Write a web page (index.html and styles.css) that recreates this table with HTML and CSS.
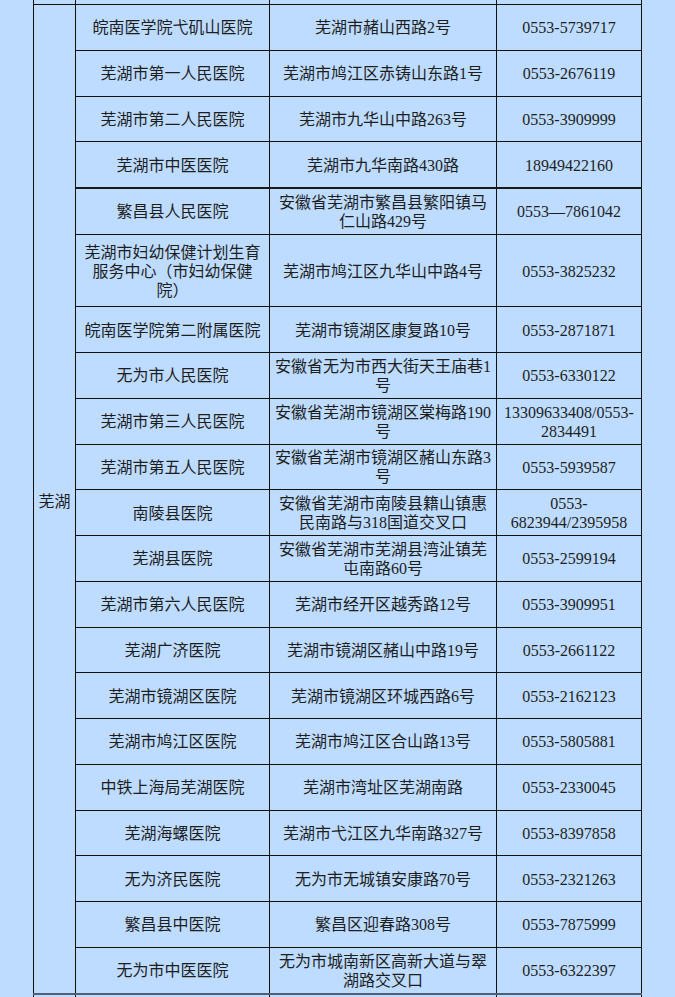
FILE: index.html
```html
<!DOCTYPE html>
<html lang="zh-CN">
<head>
<meta charset="utf-8">
<title>芜湖医院列表</title>
<link rel="stylesheet" href="styles.css">
</head>
<body>
<table class="list">
  <colgroup>
    <col class="c-city">
    <col class="c-name">
    <col class="c-addr">
    <col class="c-tel">
  </colgroup>
  <tbody>
    <tr class="r-top"><td></td><td></td><td></td><td></td></tr>
    <tr class="r"><td class="city" rowspan="21">芜湖</td><td>皖南医学院弋矶山医院</td><td>芜湖市赭山西路2号</td><td>0553-5739717</td></tr>
    <tr class="r"><td>芜湖市第一人民医院</td><td>芜湖市鸠江区赤铸山东路1号</td><td>0553-2676119</td></tr>
    <tr class="r"><td>芜湖市第二人民医院</td><td>芜湖市九华山中路263号</td><td>0553-3909999</td></tr>
    <tr class="r"><td>芜湖市中医医院</td><td>芜湖市九华南路430路</td><td>18949422160</td></tr>
    <tr class="r thick"><td>繁昌县人民医院</td><td>安徽省芜湖市繁昌县繁阳镇马<br>仁山路429号</td><td>0553—7861042</td></tr>
    <tr class="r3"><td>芜湖市妇幼保健计划生育<br>服务中心（市妇幼保健<br>院）</td><td>芜湖市鸠江区九华山中路4号</td><td>0553-3825232</td></tr>
    <tr class="r"><td>皖南医学院第二附属医院</td><td>芜湖市镜湖区康复路10号</td><td>0553-2871871</td></tr>
    <tr class="r"><td>无为市人民医院</td><td>安徽省无为市西大街天王庙巷1<br>号</td><td>0553-6330122</td></tr>
    <tr class="r"><td>芜湖市第三人民医院</td><td>安徽省芜湖市镜湖区棠梅路190<br>号</td><td>13309633408/0553-<br>2834491</td></tr>
    <tr class="r"><td>芜湖市第五人民医院</td><td>安徽省芜湖市镜湖区赭山东路3<br>号</td><td>0553-5939587</td></tr>
    <tr class="r"><td>南陵县医院</td><td>安徽省芜湖市南陵县籍山镇惠<br>民南路与318国道交叉口</td><td>0553-<br>6823944/2395958</td></tr>
    <tr class="r"><td>芜湖县医院</td><td>安徽省芜湖市芜湖县湾沚镇芜<br>屯南路60号</td><td>0553-2599194</td></tr>
    <tr class="r"><td>芜湖市第六人民医院</td><td>芜湖市经开区越秀路12号</td><td>0553-3909951</td></tr>
    <tr class="r"><td>芜湖广济医院</td><td>芜湖市镜湖区赭山中路19号</td><td>0553-2661122</td></tr>
    <tr class="r"><td>芜湖市镜湖区医院</td><td>芜湖市镜湖区环城西路6号</td><td>0553-2162123</td></tr>
    <tr class="r"><td>芜湖市鸠江区医院</td><td>芜湖市鸠江区合山路13号</td><td>0553-5805881</td></tr>
    <tr class="r"><td>中铁上海局芜湖医院</td><td>芜湖市湾址区芜湖南路</td><td>0553-2330045</td></tr>
    <tr class="r"><td>芜湖海螺医院</td><td>芜湖市弋江区九华南路327号</td><td>0553-8397858</td></tr>
    <tr class="r"><td>无为济民医院</td><td>无为市无城镇安康路70号</td><td>0553-2321263</td></tr>
    <tr class="r"><td>繁昌县中医院</td><td>繁昌区迎春路308号</td><td>0553-7875999</td></tr>
    <tr class="r"><td>无为市中医医院</td><td>无为市城南新区高新大道与翠<br>湖路交叉口</td><td>0553-6322397</td></tr>
    <tr class="r-bottom"><td></td><td></td><td></td><td></td></tr>
  </tbody>
</table>
</body>
</html>
```

FILE: styles.css
```css
html, body {
  margin: 0;
  padding: 0;
  background: #bddcff;
  overflow: hidden;
}

body {
  height: 997px;
  font-family: "Liberation Serif", "Noto Sans CJK SC", serif;
  font-size: 16px;
  color: #1e1e1e;
}

.list {
  width: 608px;
  margin: 0 auto;
  border-collapse: collapse;
  table-layout: fixed;
  background: #bddcff;
}

.c-city { width: 42px; }
.c-name { width: 194px; }
.c-addr { width: 227px; }
.c-tel  { width: 145px; }

.list td {
  border: 1px solid #111;
  padding: 1px 3px 0;
  text-align: center;
  vertical-align: middle;
  line-height: 19px;
  white-space: nowrap;
  overflow: hidden;
}

.r-top td {
  border-top: none;
  height: 4px;
  padding: 0;
}

.r td {
  height: 43.76px;
}

.r3 td {
  height: 70.6px;
}

.thick td {
  border-top: 2px solid #1a1a1a;
}

.list td.city {
  padding-top: 6px;
}

.r-bottom td {
  border-top: 2px solid #4f5f74;
  border-bottom: none;
  height: 10px;
  padding: 0;
}
```
